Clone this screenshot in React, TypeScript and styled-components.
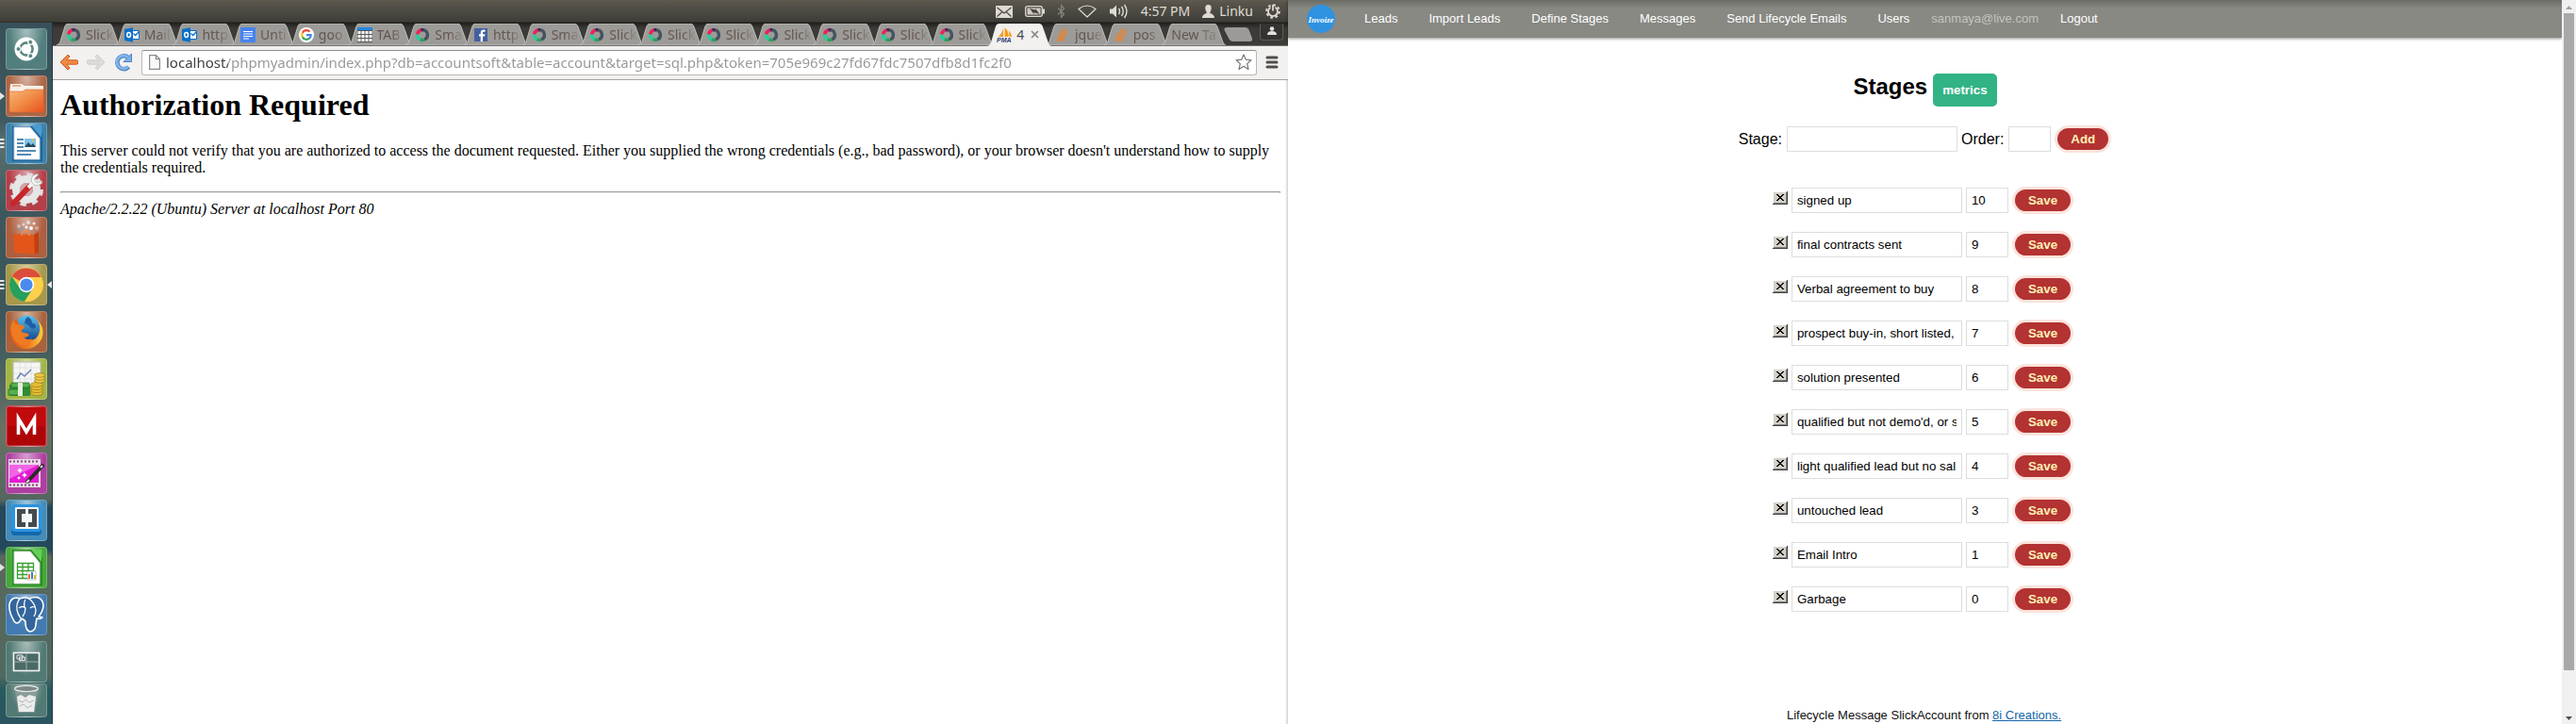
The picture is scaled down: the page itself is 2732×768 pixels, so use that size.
import React from "react";
import styled, { createGlobalStyle, css } from "styled-components";

const GlobalStyle = createGlobalStyle`
  *, *::before, *::after { box-sizing: border-box; }
  body { margin: 0; background: #fff; }
  button, input { font-family: "Liberation Sans", Arial, sans-serif; }
`;

const uiFont = `"Noto Sans", "Open Sans", sans-serif`;
const pageFont = `"Liberation Sans", Arial, sans-serif`;

const Screens = styled.div`
  display: grid;
  grid-template-columns: 1fr 1fr;
  min-height: 100vh;
`;

/* ---------- Desktop (left screen) ---------- */

const Desktop = styled.section`
  display: flex;
  flex-direction: column;
  min-width: 0;
`;

const Panel = styled.header`
  display: flex;
  align-items: center;
  justify-content: flex-end;
  gap: 13px;
  height: 24px;
  padding-right: 8px;
  background: linear-gradient(#5f5b4f 0, #57544b 3px, #3e3d38 23px, #1f1e1b 24px);
  color: #dfdbd2;
  font: 14px/22px ${uiFont};
`;

const PanelItem = styled.span`
  display: flex;
  align-items: center;
  gap: 5px;
`;

const Work = styled.div`
  display: flex;
  flex: 1;
`;

const Launcher = styled.nav`
  display: flex;
  flex-direction: column;
  gap: 6px;
  width: 56px;
  padding: 6px 6px 8px;
  background: linear-gradient(
    #38505a 0, #3f5a60 14%, #5a7070 17%, #3d585d 27%, #3c575c 42%, #4b6360 50%,
    #687264 58%, #55665f 68%, #24495a 69%, #24495a 75%, #59695d 76%, #50695f 93%, #285a5f 95%, #2a5560 100%
  );
  border-right: 1px solid #26363b;
`;

const Tile = styled.button<{ $color: string; $trash?: boolean }>`
  position: relative;
  width: 44px;
  height: ${(p) => (p.$trash ? 36 : 44)}px;
  margin-top: ${(p) => (p.$trash ? -5 : 0)}px;
  padding: 0;
  border: 1px solid rgba(255, 255, 255, 0.22);
  border-radius: 4px;
  background: radial-gradient(ellipse at 50% 0, rgba(255, 255, 255, 0.5), rgba(255, 255, 255, 0) 62%), ${(p) => p.$color};
  svg.art {
    display: block;
    margin: -1px;
  }
`;

const Pips = styled.svg<{ $right?: boolean }>`
  position: absolute;
  top: 14px;
  ${(p) => (p.$right ? css`right: -6px;` : css`left: -7px;`)}
`;

const Browser = styled.div`
  display: flex;
  flex: 1;
  flex-direction: column;
  min-width: 0;
  background: #fff;
`;

const TabStrip = styled.div`
  display: flex;
  height: 25px;
  padding: 1px 5px 0 4px;
  background: linear-gradient(#1f1e1c, #3c3b37 6px);
  border-bottom: 1px solid #74736f;
`;

const TabButton = styled.button<{ $active?: boolean }>`
  position: relative;
  z-index: ${(p) => (p.$active ? 2 : 0)};
  display: flex;
  flex: 1 1 0;
  align-items: center;
  gap: ${(p) => (p.$active ? 4 : 5)}px;
  min-width: 0;
  height: ${(p) => (p.$active ? 24 : 23)}px;
  padding: 0 2px 0 10px;
  border: 0;
  background: none;
  color: ${(p) => (p.$active ? "#4c4c4c" : "#65564f")};
  font: 14px/22px ${uiFont};
  text-align: left;
  svg { flex: none; }
`;

const TabShape = styled.svg`
  position: absolute;
  z-index: -1;
  top: 0;
  left: 0;
  width: calc(100% + 6px);
  height: 100%;
`;

const TabLabel = styled.span<{ $fade?: boolean }>`
  flex: 1;
  min-width: 0;
  overflow: hidden;
  white-space: nowrap;
  ${(p) => p.$fade && css`mask-image: linear-gradient(to right, #000 55%, rgba(0, 0, 0, 0.15) 100%);`}
`;

const NewTabButton = styled.button`
  width: 30px;
  height: 15px;
  margin: 4px 8px 0 4px;
  padding: 0;
  border: 0;
  background: none;
  svg { display: block; }
`;

const ProfileButton = styled.button`
  width: 25px;
  height: 18px;
  padding: 0 0 2px;
  border: 1px solid #5d5c58;
  border-top: 0;
  border-radius: 0 0 4px 4px;
  background: #34332f;
  line-height: 0;
`;

const Toolbar = styled.form`
  display: flex;
  align-items: center;
  gap: 9px;
  height: 36px;
  padding: 0 10px 1px 7px;
  background: #f2f1f0;
  border-bottom: 1px solid #a5a4a2;
`;

const IconButton = styled.button<{ $narrow?: boolean }>`
  width: ${(p) => (p.$narrow ? 14 : 20)}px;
  height: 20px;
  padding: 0;
  border: 0;
  background: none;
  line-height: 0;
`;

const Omnibox = styled.label`
  display: flex;
  flex: 1;
  align-items: center;
  gap: 6px;
  height: 27px;
  padding: 0 4px 0 7px;
  border: 1px solid #b9b7b4;
  border-top-color: #8f8d8a;
  border-radius: 3px;
  background: #fff;
`;

const Address = styled.input`
  flex: 1;
  min-width: 0;
  height: 24px;
  padding: 0;
  border: 0;
  outline: 0;
  background: linear-gradient(to right, #3c3c3c 66px, #979797 66px);
  background-clip: text;
  -webkit-text-fill-color: transparent;
  color: #979797;
  font: 15px/22px ${uiFont};
`;

const ErrorPage = styled.article`
  flex: 1;
  padding: 8px;
  color: #000;
  font: 16px/18px "Liberation Serif", "Times New Roman", serif;
  box-shadow: inset -3px 0 3px -2px rgba(0, 0, 0, 0.25);
`;

const ErrorTitle = styled.h1`
  margin: 0 0 21px;
  font-size: 32px;
  line-height: 37px;
`;

const ErrorText = styled.p`
  margin: 0 0 16px;
`;

const Rule = styled.hr`
  height: 2px;
  margin: 0 0 8px;
  border: 1px solid #9a9a9a;
  border-bottom-color: #eee;
`;

const Signature = styled.address`
  font-style: italic;
`;

/* ---------- Stages page (right screen) ---------- */

const AppScreen = styled.section`
  display: flex;
  min-width: 0;
  background: #fff;
  color: #111;
  font: 13px/15px ${pageFont};
`;

const AppPage = styled.div`
  display: flex;
  flex: 1;
  flex-direction: column;
  align-items: center;
  min-width: 0;
`;

const NavBar = styled.nav`
  display: flex;
  align-items: center;
  gap: 33px;
  align-self: stretch;
  height: 40px;
  padding: 0 20px;
  background: linear-gradient(#6b6c66, #888983 9px);
  box-shadow: 0 1px 3px rgba(0, 0, 0, 0.45);
`;

const NavLink = styled.a<{ $muted?: boolean }>`
  margin: ${(p) => (p.$muted ? "0 -10px" : "0")};
  padding-bottom: 2px;
  color: ${(p) => (p.$muted ? "#c3c3c0" : "#fff")};
  text-decoration: none;
`;

const Brand = styled.a`
  margin-right: -2px;
  line-height: 0;
`;

const TitleRow = styled.div`
  display: flex;
  align-items: baseline;
  gap: 6px;
  margin-top: 38px;
`;

const PageTitle = styled.h1`
  margin: 0;
  color: #000;
  font-size: 24px;
  line-height: 27px;
`;

const MetricsButton = styled.button`
  height: 35px;
  padding: 10px;
  border: 0;
  border-radius: 5px;
  background: #32b384;
  color: #fff;
  font-weight: bold;
  line-height: 15px;
`;

const AddForm = styled.form`
  display: flex;
  align-items: center;
  gap: 4px;
  margin-top: 20px;
`;

const Field = styled.label`
  display: flex;
  align-items: center;
  gap: 5px;
  color: #000;
  font-size: 16px;
  line-height: 18px;
`;

const TextBox = styled.input<{ $short?: boolean }>`
  width: ${(p) => (p.$short ? 45 : 181)}px;
  height: 27px;
  padding: 0 5px;
  border: 1px solid #ddd;
  background: #fff;
  color: #000;
`;

const PillButton = styled.button`
  height: 29px;
  padding: 0 14px;
  border: 3px solid #fbe3dc;
  border-radius: 15px;
  background: #b33232;
  color: #fdf0b4;
  font-weight: bold;
`;

const StageList = styled.ul`
  display: flex;
  flex-direction: column;
  gap: 18px;
  margin: 36px 0 0;
  padding: 0 4px 0 0;
  list-style: none;
`;

const StageRow = styled.form`
  display: flex;
  align-items: center;
  gap: 4px;
`;

const DeleteButton = styled.button`
  align-self: flex-start;
  width: 16px;
  height: 14px;
  margin-top: 5px;
  padding: 0;
  border: 0;
  background: none;
  line-height: 0;
`;

const PageFooter = styled.footer`
  margin: 101px 2px 2px 0;
  a { color: #1565a8; }
`;

const ScrollTrack = styled.div`
  display: flex;
  flex-direction: column;
  align-items: center;
  width: 15px;
  background: #f0f0f0;
`;

const ScrollArrow = styled.svg`
  flex: none;
`;

const ScrollThumb = styled.div`
  flex: 94;
  width: 11px;
  background: #a8a8a8;
`;

const ScrollRest = styled.div`
  flex: 6;
`;

/* ---------- Tab icons ---------- */

const SlickIcon = () => (
  <svg width="16" height="16" viewBox="0 0 16 16" fill="none" strokeWidth="3.4">
    <path d="M8 2.600a5.400 5.400 0 0 1 2 10.400" stroke="#44545e" />
    <path d="M10 13a5.400 5.400 0 0 1-4.500-.2" stroke="#2fa05a" />
    <path d="M5.500 12.800A5.400 5.400 0 0 1 2.700 7.400" stroke="#1cd39b" />
    <path d="M2.700 7.400A5.400 5.400 0 0 1 6.400 2.900" stroke="#ef2155" />
    <path d="M6.400 2.900A5.400 5.400 0 0 1 9 2.700" stroke="#4a1f63" />
  </svg>
);

const OutlookIcon = () => (
  <svg width="16" height="16" viewBox="0 0 16 16">
    <path d="M0 2 9 .3v15.4L0 14z" fill="#0a6fc8" />
    <path d="M9 3.5h6.500v9H9" fill="#fff" stroke="#0a6fc8" />
    <path d="m9.500 6.500 2.200 2 3.800-4" fill="none" stroke="#0a6fc8" strokeWidth="1.4" />
    <ellipse cx="4.600" cy="8" rx="1.900" ry="2.500" fill="none" stroke="#fff" strokeWidth="1.5" />
  </svg>
);

const DocsIcon = () => (
  <svg width="16" height="16" viewBox="0 0 16 16">
    <rect width="16" height="16" rx="1" fill="#4683ee" />
    <path d="M3 4.500h10M3 7h10M3 9.500h10M3 12h6" stroke="#fff" strokeWidth="1.2" />
  </svg>
);

const GoogleIcon = () => (
  <svg width="16" height="16" viewBox="0 0 16 16" fill="none" strokeWidth="2.2">
    <circle cx="8" cy="8" r="8" fill="#fff" />
    <path d="M11.500 4.600A4.800 4.800 0 0 0 3.800 5.700" stroke="#ea4335" />
    <path d="M3.800 5.700a4.800 4.800 0 0 0 0 4.700" stroke="#fbbc05" />
    <path d="M3.800 10.400a4.800 4.800 0 0 0 7.300 1.200" stroke="#34a853" />
    <path d="M11.100 11.600A4.600 4.600 0 0 0 12.700 8.200H8" stroke="#4285f4" />
  </svg>
);

const TableIcon = () => (
  <svg width="16" height="16" viewBox="0 0 16 16">
    <rect width="16" height="16" fill="#555" />
    <rect width="16" height="3" fill="#1e88e5" />
    {[4, 8, 12].map((y) => [1, 5, 9, 13].map((x) => <rect key={`${x}-${y}`} x={x - 0.5} y={y} width="3" height="3" fill="#fff" />))}
  </svg>
);

const FacebookIcon = () => (
  <svg width="16" height="16" viewBox="0 0 16 16">
    <rect x="1" y="1" width="14" height="14" fill="#4460a0" />
    <path d="M10 15V9.500h2l.4-2.200H10V6c0-.8.3-1.200 1.200-1.200h1.300V2.700C9.300 2.300 7.700 3.300 7.700 5.800v1.500H6v2.200h1.700V15z" fill="#fff" />
  </svg>
);

const PmaIcon = () => (
  <svg width="17" height="17" viewBox="0 0 17 17">
    <path d="M7 1v9H2q4-4 5-9zM8.500 0q5 5 4 10h-4zM13 3q3 4 3 7h-2.500z" fill="#f89c1c" />
    <text x="0" y="16" fontFamily="Liberation Sans, sans-serif" fontSize="7" fontWeight="bold" fontStyle="italic" fill="#333a75">PMA</text>
  </svg>
);

const StackIcon = () => (
  <svg width="16" height="16" viewBox="0 0 16 16" stroke="#f08024" strokeWidth="1.4" fill="none">
    <path d="M2 13.500h8M2.200 11.300l8 .3M2.800 8.300l7.600 1.800M4.300 5l6.700 3.700M7 2.300l5 5M10.500 1l1.800 5" />
  </svg>
);

/* ---------- Panel icons ---------- */

const MailIcon = () => (
  <svg width="18" height="13" viewBox="0 0 18 13">
    <rect width="18" height="13" rx="1" fill="#dfdbd2" />
    <path d="m1.500 2 7.500 6 7.500-6M1.500 11.500 6.500 7M16.500 11.500l-5-4.500" fill="none" stroke="#45433c" strokeWidth="1.1" />
  </svg>
);

const BatteryIcon = () => (
  <svg width="21" height="12" viewBox="0 0 21 12">
    <rect x=".7" y=".7" width="17.6" height="10.6" rx="2" fill="none" stroke="#dfdbd2" strokeWidth="1.3" />
    <rect x="2.5" y="2.5" width="14" height="7" fill="#cfcbc2" />
    <path d="M19 3.500h2v5h-2z" fill="#dfdbd2" />
    <path d="m5 3 6 1.500V3l4.500 6-6-1.800V9z" fill="#45433c" />
  </svg>
);

const BluetoothIcon = () => (
  <svg width="9" height="16" viewBox="0 0 9 16" fill="none" stroke="#87847b" strokeWidth="1.2">
    <path d="m1 4.500 6.500 6.500L4.500 14.500v-13L7.500 5 1 11.500" />
  </svg>
);

const WifiIcon = () => (
  <svg width="20" height="14" viewBox="0 0 20 14" fill="none" stroke="#dfdbd2" strokeWidth="1.2">
    <path d="M10 13 1 4.500q9-7 18 0z" strokeLinejoin="round" />
  </svg>
);

const SoundIcon = () => (
  <svg width="21" height="16" viewBox="0 0 21 16" fill="none" stroke="#dfdbd2" strokeWidth="1.4">
    <path d="M1 5.500h3l4-4v13l-4-4H1z" fill="#dfdbd2" stroke="none" />
    <path d="M10.500 5q2 3 0 6M13.500 3q3.500 5 0 10M16.500 1q5 7 0 14" />
  </svg>
);

const UserIcon = () => (
  <svg width="13" height="14" viewBox="0 0 13 14">
    <path d="M6.500 0C9 0 9.800 1.600 9.700 4c-.1 2-.9 3-1.500 4 0 2 4.800 1.500 4.800 6H0c0-4.500 4.800-4 4.800-6-.6-1-1.400-2-1.500-4C3.200 1.600 4 0 6.500 0z" fill="#dfdbd2" />
  </svg>
);

const PowerGearIcon = () => (
  <svg width="16" height="16" viewBox="0 0 16 16" fill="none" stroke="#dfdbd2">
    <circle cx="8" cy="8" r="6.8" strokeWidth="2" strokeDasharray="2.67 2.67" />
    <path d="M5.500 3.800a5 5 0 1 0 5 0" strokeWidth="1.8" />
    <path d="M8 1v6.500" strokeWidth="1.8" />
  </svg>
);

/* ---------- Launcher art ---------- */

const Art = ({ children }: { children: React.ReactNode }) => (
  <svg className="art" width="44" height="44" viewBox="0 0 44 44">{children}</svg>
);

const UbuntuArt = () => (
  <Art>
    <circle cx="22" cy="22" r="12.5" fill="#fff" />
    <circle cx="22" cy="22" r="6.6" fill="none" stroke="#5d8583" strokeWidth="2.6" />
    {[60, 180, 300].map((a) => (
      <path key={a} d="M22 22h10" stroke="#fff" strokeWidth="1.4" transform={`rotate(${a} 22 22)`} />
    ))}
    <circle cx="22" cy="22" r="5" fill="#fff" />
    {[0, 120, 240].map((a) => (
      <circle key={a} cx="13.5" cy="22" r="2.6" fill="#5d8583" stroke="#fff" strokeWidth="1.2" transform={`rotate(${a} 22 22)`} />
    ))}
  </Art>
);

const FilesArt = () => (
  <Art>
    <defs>
      <linearGradient id="folder" x1="0" y1="0" x2="1" y2="1">
        <stop offset="0" stopColor="#f8b878" /><stop offset=".5" stopColor="#f08a45" /><stop offset="1" stopColor="#e9501c" />
      </linearGradient>
    </defs>
    <path d="M5 9h12l3 2h20v8H4z" fill="#f7f0e9" />
    <path d="M7 11h9" stroke="#ef9a68" strokeWidth="1.5" />
    <path d="M4 17h14l3-2h19v22q0 2-2 2H6q-2 0-2-2z" fill="url(#folder)" stroke="#dc6a2c" strokeWidth=".6" />
  </Art>
);

const WriterArt = () => (
  <Art>
    <path d="M7 4h24l8 9v28H7z" fill="#1d659c" />
    <path d="M9 5h17l10 12v22H9z" fill="#fff" stroke="#c8d6e0" />
    <path d="M27 3h11v13z" fill="#4a9bd2" />
    <path d="M12 18h7M12 22h7M12 26h7M12 30h20M12 34h15" stroke="#1d659c" strokeWidth="1.6" />
    <rect x="20" y="17" width="12" height="9" fill="#80c3e8" />
    <path d="m20 26 4-5 3 3 2-2 3 4z" fill="#234b5e" />
    <circle cx="29" cy="19" r="1.2" fill="#f0c040" />
  </Art>
);

const SettingsArt = () => (
  <Art>
    <circle cx="22" cy="21" r="14" fill="none" stroke="#dedede" strokeWidth="8" strokeDasharray="5.5 5.5" />
    <circle cx="22" cy="21" r="11" fill="none" stroke="#e6e6e6" strokeWidth="8" />
    <circle cx="22" cy="21" r="7" fill="#cfa5a7" />
    <path d="m8 36 17-18" stroke="#c6262c" strokeWidth="6" strokeLinecap="round" />
    <path d="m24 19 6-6" stroke="#f2f2f2" strokeWidth="4" />
    <path d="M35 5a6 6 0 1 0 4 7l-6 2-3-4z" fill="#f5f5f5" stroke="#aaa" strokeWidth=".7" />
  </Art>
);

const SoftwareArt = () => (
  <Art>
    {[[14, 10, 2, "#c9b9b9"], [19, 8, 1.5, "#e8d6c8"], [24, 6, 2, "#ddd"], [30, 7, 1.5, "#f4e9e0"], [17, 13, 2, "#8a9cae"], [27, 12, 2, "#f7f7f7"], [33, 12, 2, "#d8a890"], [22, 11, 1.5, "#fff"]].map(([x, y, r, c]) => (
      <circle key={`${x}-${y}`} cx={x} cy={y} r={r} fill={c as string} />
    ))}
    <path d="m8 18 22 1 5-3v21l-4 3-22-2z" fill="#e2561b" />
    <path d="m30 19 5-3v21l-4 3z" fill="#c23f10" />
    <path d="M17 20q0-5 4-5t4 5" fill="none" stroke="#f08c50" strokeWidth="1.5" />
  </Art>
);

const ChromeArt = () => (
  <Art>
    <circle cx="22" cy="22" r="18" fill="#f9c83e" />
    <path d="M22 22 6.400 13A18 18 0 0 1 37.600 14H22z" fill="#db4c3c" />
    <path d="M6.400 13A18 18 0 0 0 20 39.900L29 26 22 22 14.500 25z" fill="#27a05d" />
    <path d="M37.600 14H22l7 12-9 13.900A18 18 0 0 0 37.600 14z" fill="#fcd04b" />
    <circle cx="22" cy="22" r="8.200" fill="#fff" />
    <circle cx="22" cy="22" r="6.600" fill="#4a8bf0" />
  </Art>
);

const FirefoxArt = () => (
  <Art>
    <defs>
      <linearGradient id="fox" x1="0" y1="0" x2="1" y2="0">
        <stop offset="0" stopColor="#dd5418" /><stop offset=".6" stopColor="#f0801f" /><stop offset="1" stopColor="#fbd044" />
      </linearGradient>
      <linearGradient id="globe" x1="0" y1="0" x2="0" y2="1">
        <stop offset="0" stopColor="#5cc0ec" /><stop offset="1" stopColor="#174a8e" />
      </linearGradient>
    </defs>
    <circle cx="22" cy="22.500" r="17.500" fill="url(#fox)" />
    <path d="M12 9Q18 3 27 5q8 3 9 11 1 8-4 13-5 3-10 1-6-3-5-9z" fill="url(#globe)" />
    <path d="M23 6q5 2 5 7 4 0 4 4-2 3-5 1-3-4-7-5 0-4 3-7z" fill="#1c5da6" />
    <path d="M5 17Q6 12 9 9q0 4 3 5 5 0 8 2 0 3-4 4 0 2 3 3 4 0 6 2-2 3-6 3 4 4 9 1-3 8-11 7Q6 33 5 17z" fill="#ee7a22" />
  </Art>
);

const MoneyArt = () => (
  <Art>
    <rect x="8" y="4" width="29" height="26" fill="#f5f5f3" stroke="#b8b8b0" />
    <path d="M9 10h27M9 16h27M9 22h27M15 5v24M21 5v24M27 5v24" stroke="#ddd" strokeWidth=".8" />
    <path d="m12 22 4-6 4 3 7-7" fill="none" stroke="#6884b4" strokeWidth="1.5" />
    <path d="M4 28h22v12H4z" fill="#2f8a35" />
    <path d="M6 26h19v5H6zM3 33h13v6H3z" fill="#55b04c" stroke="#1f6b28" strokeWidth=".7" />
    <path d="M13 26h5v14h-5z" fill="#e8eddc" />
    {[37, 34, 31, 28].map((y) => <ellipse key={y} cx="33" cy={y} rx="6.5" ry="2.6" fill="#e3bd34" stroke="#9c7818" strokeWidth=".7" />)}
    {[24, 21, 18].map((y) => <ellipse key={y} cx="36" cy={y} rx="5.5" ry="2.2" fill="#ecca48" stroke="#9c7818" strokeWidth=".7" />)}
  </Art>
);

const MArt = () => (
  <Art>
    <rect x="2" y="2" width="40" height="40" fill="#c10a0c" />
    <path d="M2 22h40v20H2z" fill="#8c0000" opacity=".35" />
    <path d="M13.500 31V14l8.500 14 8.500-14v17" fill="none" stroke="#fff" strokeWidth="3.6" />
  </Art>
);

const FilmArt = () => (
  <Art>
    <rect x="3" y="7" width="34" height="30" fill="#ead9e8" />
    <path d="M4 9.500h32M4 34.500h32" stroke="#7c4c78" strokeWidth="2" strokeDasharray="2 2" />
    <rect x="4" y="13" width="31" height="19" fill="#e21cd0" />
    <path d="M4 13h31L4 28z" fill="#f264e6" />
    <path d="m15 16 1 2 2 1-2 1-1 2-1-2-2-1 2-1zM20 21l1 2 2 1-2 1-1 2-1-2-2-1 2-1zM14 25l.7 1.300L16 27l-1.300.7L14 29l-.7-1.300L12 27l1.300-.7z" fill="#fff" />
    <path d="m23 31 16-17" stroke="#2a2a2a" strokeWidth="4" strokeLinecap="round" />
    <path d="m22 32 3-3M37 16l2-2" stroke="#ddd" strokeWidth="2" />
  </Art>
);

const BracketsArt = () => (
  <Art>
    <rect x="6" y="7" width="32" height="31" rx="4" fill="#1268ae" />
    <rect x="6" y="5" width="32" height="29" rx="4" fill="#2b93e0" />
    <rect x="10" y="8" width="25" height="23" rx="1" fill="#f4f6f7" />
    <path d="M21 12.500h-6.500v14H21M24 12.500h6.500v14H24" fill="none" stroke="#444b50" strokeWidth="5" />
  </Art>
);

const CalcArt = () => (
  <Art>
    <path d="M7 3h24l8 9v29H7z" fill="#2a8a24" />
    <path d="M9 5h17l10 12v22H9z" fill="#fff" stroke="#cfdccf" />
    <path d="M27 3h11v13z" fill="#66cf55" />
    <path d="M12.500 17.500h17v16h-17zM12.500 21.500h17M12.500 25.500h17M12.500 29.500h17M18 17.500v16M24 17.500v16" fill="none" stroke="#35a02c" strokeWidth="1.3" />
    <rect x="23" y="26" width="9" height="9" fill="#fff" stroke="#888" strokeWidth=".5" />
    <path d="M24 29h2v5h-2z" fill="#e8702c" /><path d="M27 27h2v7h-2z" fill="#2f7fc8" /><path d="M30 30h2v4h-2z" fill="#e0b030" />
  </Art>
);

const PostgresArt = () => (
  <Art>
    <path
      d="M15 5Q6 2 4 11q-1 8 5 18 3 4 6 0l2-3q4 2 4 4 0 9 5 10 6-1 6-8l1-6q5 1 6-1l-4-1q7-9 4-16-4-7-14-3-5-2-10 0z"
      fill="#33659c" stroke="#fff" strokeWidth="1.6" strokeLinejoin="round"
    />
    <path d="M15 5q-4 5-3 12 1 5 4 9M25 5q6 5 7 12 0 4-2 7M14 15q4-3 7 0 0 5-3 9M21 6q-2 3-1 8M26 15q2-2 5-1" fill="none" stroke="#fff" strokeWidth="1.3" />
  </Art>
);

const WorkspaceArt = () => (
  <Art>
    <rect x="8.500" y="12.500" width="27" height="19" fill="#4a6a66" stroke="#f4f4f4" strokeWidth="1.6" />
    <path d="M22 13v18M9 22h26" stroke="#9fb0ad" />
    <path d="M12 15h6v4h-6zM14.500 17h6v3.500h-6z" fill="#5b7370" stroke="#e8e8e8" />
  </Art>
);

const TrashArt = () => (
  <svg className="art" width="44" height="36" viewBox="0 0 44 36">
    <path d="M10 5h24l-3 26H13z" fill="#8c9b98" opacity=".8" />
    <path d="M12 14l4-2 5 3 4-3 7 2-2 16H14z" fill="#ececec" />
    <path d="m14 18 4 2 3-3 4 3 5-2M15 24l4-2 4 4 5-3" fill="none" stroke="#b5b5b5" />
    <ellipse cx="22" cy="5.500" rx="12.500" ry="3" fill="#7c8a87" stroke="#eee" strokeWidth="1.2" />
  </svg>
);

/* ---------- Data ---------- */

type TileSpec = { name: string; color: string; art: React.FC; left?: "one" | "many"; right?: boolean };

const tiles: TileSpec[] = [
  { name: "Dash", color: "#527f7e", art: UbuntuArt },
  { name: "Files", color: "#ad6645", art: FilesArt, left: "one" },
  { name: "Writer", color: "#3c82ab", art: WriterArt, left: "many" },
  { name: "System settings", color: "#b43f49", art: SettingsArt },
  { name: "Software centre", color: "#ad5f40", art: SoftwareArt },
  { name: "Chrome", color: "#a7984b", art: ChromeArt, left: "many", right: true },
  { name: "Firefox", color: "#a8623c", art: FirefoxArt },
  { name: "Money manager", color: "#a2b544", art: MoneyArt },
  { name: "M", color: "#b8303a", art: MArt },
  { name: "Video editor", color: "#ad3fa0", art: FilmArt },
  { name: "Brackets", color: "#448cb8", art: BracketsArt },
  { name: "Calc", color: "#46a83b", art: CalcArt, left: "one" },
  { name: "pgAdmin", color: "#427ab2", art: PostgresArt },
  { name: "Workspaces", color: "#527a74", art: WorkspaceArt },
];

type TabSpec = { icon?: React.FC; label: string; active?: boolean };

const slick: TabSpec = { icon: SlickIcon, label: "Slick" };
const tabs: TabSpec[] = [
  slick,
  { icon: OutlookIcon, label: "Mail" },
  { icon: OutlookIcon, label: "http" },
  { icon: DocsIcon, label: "Unti" },
  { icon: GoogleIcon, label: "goo" },
  { icon: TableIcon, label: "TAB" },
  { icon: SlickIcon, label: "Sma" },
  { icon: FacebookIcon, label: "http" },
  { icon: SlickIcon, label: "Sma" },
  slick, slick, slick, slick, slick, slick, slick,
  { icon: PmaIcon, label: "4", active: true },
  { icon: StackIcon, label: "jque" },
  { icon: StackIcon, label: "pos" },
  { label: "New Ta" },
];

const links = ["Leads", "Import Leads", "Define Stages", "Messages", "Send Lifecycle Emails", "Users"];

const stages: [string, string][] = [
  ["signed up", "10"],
  ["final contracts sent", "9"],
  ["Verbal agreement to buy", "8"],
  ["prospect buy-in, short listed,", "7"],
  ["solution presented", "6"],
  ["qualified but not demo'd, or s", "5"],
  ["light qualified lead but no sal", "4"],
  ["untouched lead", "3"],
  ["Email Intro", "1"],
  ["Garbage", "0"],
];

/* ---------- Components ---------- */

function LauncherTile({ name, color, art: Picture, left, right }: TileSpec) {
  return (
    <Tile type="button" aria-label={name} $color={color}>
      <Picture />
      {left === "one" && (
        <Pips width="6" height="14" viewBox="0 0 6 14"><path d="M0 3l5 4-5 4z" fill="#e4e4e4" /></Pips>
      )}
      {left === "many" && (
        <Pips width="6" height="14" viewBox="0 0 6 14"><path d="M0 2h4l1 1-1 1H0zM0 6h4l1 1-1 1H0zM0 10h4l1 1-1 1H0z" fill="#e4e4e4" /></Pips>
      )}
      {right && (
        <Pips $right width="5" height="14" viewBox="0 0 5 14"><path d="M5 3 0 7l5 4z" fill="#e4e4e4" /></Pips>
      )}
    </Tile>
  );
}

function BrowserTab({ icon: Icon, label, active }: TabSpec) {
  return (
    <TabButton type="button" $active={active}>
      <TabShape viewBox="0 0 68 24" preserveAspectRatio="none">
        <path
          d="M0 24Q3 23 4 20L9 3Q10 0 13 0H55Q58 0 59 3L65 20Q66 23 68 24z"
          fill={active ? "#f2f1f0" : "#9c9b98"} stroke={active ? "none" : "#c0bfbc"} strokeWidth="1"
        />
      </TabShape>
      {Icon && <Icon />}
      <TabLabel $fade={!active}>{label}</TabLabel>
      {active && (
        <svg width="14" height="10" viewBox="0 0 14 10"><path d="m1 1 7 7M8 1 1 8" stroke="#858381" strokeWidth="1.6" /></svg>
      )}
    </TabButton>
  );
}

function DesktopScreen() {
  return (
    <Desktop>
      <Panel>
        <MailIcon />
        <BatteryIcon />
        <BluetoothIcon />
        <WifiIcon />
        <SoundIcon />
        <PanelItem>4:57 PM</PanelItem>
        <PanelItem><UserIcon />Linku</PanelItem>
        <PowerGearIcon />
      </Panel>
      <Work>
        <Launcher aria-label="Launcher">
          {tiles.map((t) => <LauncherTile key={t.name} {...t} />)}
          <Tile type="button" aria-label="Trash" $color="#527a74" $trash><TrashArt /></Tile>
        </Launcher>
        <Browser>
          <TabStrip>
            {tabs.map((t, i) => <BrowserTab key={i} {...t} />)}
            <NewTabButton type="button" aria-label="New tab">
              <svg width="30" height="15" viewBox="0 0 30 15"><path d="M3 .5h20q2 0 3 2l4 10q0 2-2 2H9q-2 0-3-2L1 3Q0 .5 3 .5z" fill="#9c9b98" stroke="#b5b4b1" strokeWidth=".6" /></svg>
            </NewTabButton>
            <ProfileButton type="button" aria-label="Profile">
              <svg width="10" height="10" viewBox="0 0 10 10"><circle cx="5" cy="2.500" r="2.300" fill="#e2e1df" /><path d="M0 9q0-4 5-4t5 4z" fill="#e2e1df" /></svg>
            </ProfileButton>
          </TabStrip>
          <Toolbar onSubmit={(e) => e.preventDefault()}>
            <IconButton type="button" aria-label="Back">
              <svg width="20" height="20" viewBox="0 0 20 20"><path d="M1 10 9 2l2 2-3.500 3.800H18q2 0 2 2.200t-2 2.200H7.500L11 16l-2 2z" fill="#f08b45" stroke="#cf5c22" /></svg>
            </IconButton>
            <IconButton type="button" aria-label="Forward">
              <svg width="20" height="20" viewBox="0 0 20 20"><path d="m19 10-8-8-2 2 3.500 3.800H2q-2 0-2 2.200t2 2.200h10.500L9 16l2 2z" fill="#dddbd8" stroke="#cfccc8" /></svg>
            </IconButton>
            <IconButton type="button" aria-label="Reload">
              <svg width="20" height="20" viewBox="0 0 20 20">
                <path d="M15.500 15a7 7 0 1 1-.5-10" fill="none" stroke="#4a82c4" strokeWidth="4.6" />
                <path d="M18.500 1v8.500H10z" fill="#7db0e4" stroke="#4a82c4" />
                <path d="M15 14.800a7 7 0 1 1 0-9.800" fill="none" stroke="#84b5e8" strokeWidth="2.8" />
              </svg>
            </IconButton>
            <Omnibox>
              <svg width="12" height="16" viewBox="0 0 12 16"><path d="M.6.6h6.800l4 4v10.800H.6zM7.400.6v4h4" fill="#fafafa" stroke="#8a8a8a" strokeWidth="1.2" /></svg>
              <Address
                aria-label="Address"
                defaultValue="localhost/phpmyadmin/index.php?db=accountsoft&table=account&target=sql.php&token=705e969c27fd67fdc7507dfb8d1fc2f0"
              />
              <svg width="18" height="18" viewBox="0 0 18 18"><path d="m9 1 2.300 5.200 5.700.6-4.300 3.800 1.300 5.900-5-3.200-5 3.200 1.300-5.900L1 6.800l5.700-.6z" fill="#fff" stroke="#77767a" strokeWidth="1.2" strokeLinejoin="round" /></svg>
            </Omnibox>
            <IconButton type="button" aria-label="Menu" $narrow>
              <svg width="14" height="14" viewBox="0 0 14 14"><path d="M2 2h10M2 7h10M2 12h10" stroke="#4f4e4c" strokeWidth="3" strokeLinecap="round" /></svg>
            </IconButton>
          </Toolbar>
          <ErrorPage>
            <ErrorTitle>Authorization Required</ErrorTitle>
            <ErrorText>
              This server could not verify that you are authorized to access the document requested. Either you supplied the wrong
              credentials (e.g., bad password), or your browser doesn't understand how to supply the credentials required.
            </ErrorText>
            <Rule />
            <Signature>Apache/2.2.22 (Ubuntu) Server at localhost Port 80</Signature>
          </ErrorPage>
        </Browser>
      </Work>
    </Desktop>
  );
}

function StagesScreen() {
  const stay = (e: React.FormEvent) => e.preventDefault();
  return (
    <AppScreen>
      <AppPage>
        <NavBar>
          <Brand href="#" aria-label="Invoize">
            <svg width="30" height="30" viewBox="0 0 30 30">
              <circle cx="15" cy="15" r="15" fill="#2f92e0" />
              <text x="15" y="19" textAnchor="middle" fontFamily="Liberation Serif, serif" fontSize="9" fontStyle="italic" fontWeight="bold" fill="#fff">Invoize</text>
            </svg>
          </Brand>
          {links.map((l) => <NavLink key={l} href="#">{l}</NavLink>)}
          <NavLink href="#" $muted>sanmaya@live.com</NavLink>
          <NavLink href="#">Logout</NavLink>
        </NavBar>
        <TitleRow>
          <PageTitle>Stages</PageTitle>
          <MetricsButton type="button">metrics</MetricsButton>
        </TitleRow>
        <AddForm onSubmit={stay}>
          <Field>Stage: <TextBox type="text" /></Field>
          <Field>Order: <TextBox type="text" $short /></Field>
          <PillButton type="submit">Add</PillButton>
        </AddForm>
        <StageList>
          {stages.map(([name, order]) => (
            <li key={name}>
              <StageRow onSubmit={stay}>
                <DeleteButton type="button" aria-label={`Delete ${name}`}>
                  <svg width="16" height="14" viewBox="0 0 16 14" shapeRendering="crispEdges">
                    <rect width="16" height="14" fill="#404040" />
                    <rect width="15" height="13" fill="#fff" />
                    <rect x="1" y="1" width="14" height="12" fill="#808080" />
                    <rect x="1" y="1" width="13" height="11" fill="#d4d0c8" />
                    <path d="m4 3 7 7M5 3l7 7M11 3l-7 7M12 3l-7 7" stroke="#000" strokeWidth="1" />
                  </svg>
                </DeleteButton>
                <TextBox type="text" aria-label="Stage" defaultValue={name} />
                <TextBox type="text" aria-label="Order" defaultValue={order} $short />
                <PillButton type="submit">Save</PillButton>
              </StageRow>
            </li>
          ))}
        </StageList>
        <PageFooter>Lifecycle Message SlickAccount from <a href="#">8i Creations.</a></PageFooter>
      </AppPage>
      <ScrollTrack aria-hidden="true">
        <ScrollArrow width="15" height="14" viewBox="0 0 15 14"><path d="M4 10h7L7.500 6z" fill="#a0a0a0" /></ScrollArrow>
        <ScrollThumb />
        <ScrollRest />
        <ScrollArrow width="15" height="14" viewBox="0 0 15 14"><path d="M4 5h7L7.500 9z" fill="#505050" /></ScrollArrow>
      </ScrollTrack>
    </AppScreen>
  );
}

export default function App() {
  return (
    <>
      <GlobalStyle />
      <Screens>
        <DesktopScreen />
        <StagesScreen />
      </Screens>
    </>
  );
}
